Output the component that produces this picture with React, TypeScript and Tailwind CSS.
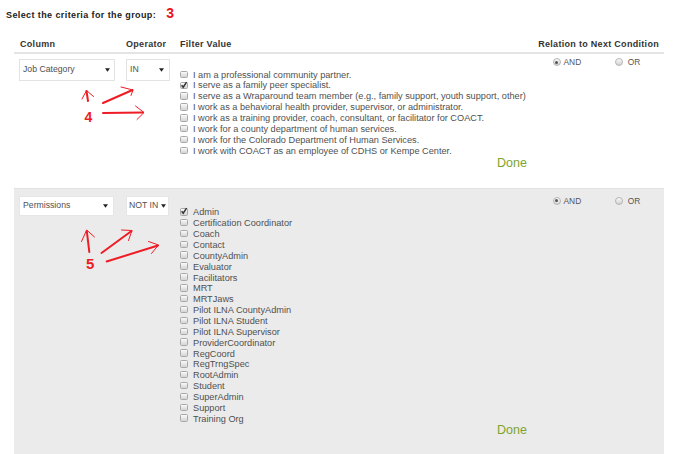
import React from "react"

const jobCategories = [
  "I am a professional community partner.",
  "I serve as a family peer specialist.",
  "I serve as a Wraparound team member (e.g., family support, youth support, other)",
  "I work as a behavioral health provider, supervisor, or administrator.",
  "I work as a training provider, coach, consultant, or facilitator for COACT.",
  "I work for a county department of human services.",
  "I work for the Colorado Department of Human Services.",
  "I work with COACT as an employee of CDHS or Kempe Center.",
]

const permissions = [
  "Admin",
  "Certification Coordinator",
  "Coach",
  "Contact",
  "CountyAdmin",
  "Evaluator",
  "Facilitators",
  "MRT",
  "MRTJaws",
  "Pilot ILNA CountyAdmin",
  "Pilot ILNA Student",
  "Pilot ILNA Supervisor",
  "ProviderCoordinator",
  "RegCoord",
  "RegTrngSpec",
  "RootAdmin",
  "Student",
  "SuperAdmin",
  "Support",
  "Training Org",
]

function Caret() {
  return (
    <svg width="5" height="4" viewBox="0 0 5 4" className="shrink-0">
      <path d="M0 0.2h5L2.5 3.8z" fill="#222" />
    </svg>
  )
}

function Checkbox({ checked }: { checked?: boolean }) {
  return (
    <span className="relative w-[7.5px] h-[7.5px] shrink-0 rounded-[1.5px] border border-[#a8a8a8] bg-linear-to-b from-[#fafafa] to-[#d4d4d4]">
      {checked && (
        <svg className="absolute left-[-1px] top-[-2px]" width="8" height="8" viewBox="0 0 8 8">
          <path d="M1.6 4.3 L3.2 6.2 L6.6 1.2" fill="none" stroke="#333" strokeWidth="1.5" />
        </svg>
      )}
    </span>
  )
}

function Radio({ checked }: { checked?: boolean }) {
  return (
    <span className="flex items-center justify-center w-[7.5px] h-[7.5px] rounded-full border border-[#b5b5b5] bg-linear-to-b from-[#fbfbfb] to-[#d2d2d2]">
      {checked && <span className="w-[3px] h-[3px] rounded-full bg-[#555]" />}
    </span>
  )
}

function Relation() {
  return (
    <div className="flex items-center h-[14px] pl-[17px] text-[8.4px] text-[#555]">
      <Radio checked />
      <span className="ml-[3px]">AND</span>
      <span className="ml-[34px]">
        <Radio />
      </span>
      <span className="ml-[5px]">OR</span>
    </div>
  )
}

export default function App() {
  return (
    <div className="relative w-[682px] h-[454px] overflow-hidden bg-white pt-[7px] font-['Liberation_Sans',Arial,sans-serif]">
      {/* title */}
      <div className="flex items-baseline pl-[6px] h-[12px] leading-[12px]">
        <span className="text-[9px] font-bold tracking-[0.4px] text-[#222]">Select the criteria for the group:</span>
        <span className="ml-[10px] text-[14px] font-bold text-[#e8141b]">3</span>
      </div>

      <div className="ml-[14px] w-[650px]">
        {/* header */}
        <div className="flex mt-[19px] pb-[2px] border-b-2 border-[#e4e4e4] text-[9px] leading-[12px] font-bold tracking-[0.3px] text-[#333]">
          <div className="w-[112px] pl-[6px]">Column</div>
          <div className="w-[54px]">Operator</div>
          <div className="flex-1">Filter Value</div>
          <div className="pr-[5px]">Relation to Next Condition</div>
        </div>

        {/* condition 1 */}
        <div className="flex pb-[19px] text-[#505050]">
          <div className="w-[112px] pl-[5px] pt-[5px]">
            <div className="flex items-center justify-between w-[96px] h-[22px] border border-[#e3e3e3] bg-white pl-[3px] pr-[4px] text-[8.7px]">
              <span>Job Category</span>
              <Caret />
            </div>
          </div>
          <div className="w-[54px] pt-[5px]">
            <div className="flex items-center justify-between w-[44px] h-[22px] border border-[#e3e3e3] bg-white pl-[3px] pr-[5px] text-[8.7px]">
              <span>IN</span>
              <Caret />
            </div>
          </div>
          <div className="flex-1 pt-[16px]">
            {jobCategories.map((c, i) => (
              <div key={c} className="flex items-center h-[10.86px] text-[9.2px] whitespace-nowrap">
                <span className="mb-[2px] flex">
                  <Checkbox checked={i === 1} />
                </span>
                <span className="ml-[5.5px]">{c}</span>
              </div>
            ))}
            <div className="ml-[317px] text-[12.5px] leading-[12px] text-[#7ea42c]">Done</div>
          </div>
          <div className="w-[128px] pt-[1px]">
            <Relation />
          </div>
        </div>

        {/* condition 2 */}
        <div className="flex h-[266px] border-t border-[#e1e1e1] bg-[#ebebeb] text-[#505050]">
          <div className="w-[112px] pl-[5px] pt-[7px]">
            <div className="flex items-center justify-between w-[95px] h-[20px] border border-[#e6e6e6] bg-white pl-[3px] pr-[5px] text-[8.7px]">
              <span>Permissions</span>
              <Caret />
            </div>
          </div>
          <div className="w-[54px] pt-[7px]">
            <div className="flex items-center justify-between w-[43px] h-[20px] border border-[#e6e6e6] bg-white pl-[2px] pr-[2px] text-[8.7px] whitespace-nowrap">
              <span>NOT IN</span>
              <Caret />
            </div>
          </div>
          <div className="flex-1 pt-[19px]">
            {permissions.map((p, i) => (
              <div key={p} className="flex items-center h-[10.86px] text-[9.2px] whitespace-nowrap">
                <span className="mb-[3px] flex">
                  <Checkbox checked={i === 0} />
                </span>
                <span className="ml-[5.5px]">{p}</span>
              </div>
            ))}
            <div className="mt-[-1px] ml-[317px] text-[12.5px] leading-[12px] text-[#7ea42c]">Done</div>
          </div>
          <div className="w-[128px] pt-[5px]">
            <Relation />
          </div>
        </div>
      </div>

      {/* red annotations */}
      <svg className="absolute left-0 top-0 pointer-events-none" width="682" height="454" viewBox="0 0 682 454">
        <g fill="none" stroke="#ee1c24" strokeLinecap="round">
          <path d="M88 101 L86.5 91" strokeWidth="2" />
          <path d="M82 99 L86.5 90.5 L93.5 96.5" strokeWidth="1" />
          <path d="M103 103 L132.5 90" strokeWidth="2" />
          <path d="M121 87 L133 90 L131 95.5" strokeWidth="1" />
          <path d="M103 113 L143 112.5" strokeWidth="2" />
          <path d="M135.5 106 L144 112.5 L137 119.5" strokeWidth="1" />

          <path d="M89.3 252 L86.8 231" strokeWidth="2" />
          <path d="M81.5 241.5 L86.7 230 L94.5 237" strokeWidth="1" />
          <path d="M101.5 253 L131.5 231" strokeWidth="2" />
          <path d="M121.5 230 L132 230.5 L128.5 240.5" strokeWidth="1" />
          <path d="M106.7 261.5 L158 245.5" strokeWidth="2" />
          <path d="M148.5 241.5 L158.5 245 L151.5 253.5" strokeWidth="1" />
        </g>
      </svg>
      <span className="absolute left-[84.5px] top-[110px] text-[14px] leading-[14px] font-bold text-[#ee1c24]">4</span>
      <span className="absolute left-[86px] top-[255.5px] text-[15px] leading-[15px] font-bold text-[#ee1c24]">5</span>
    </div>
  )
}
